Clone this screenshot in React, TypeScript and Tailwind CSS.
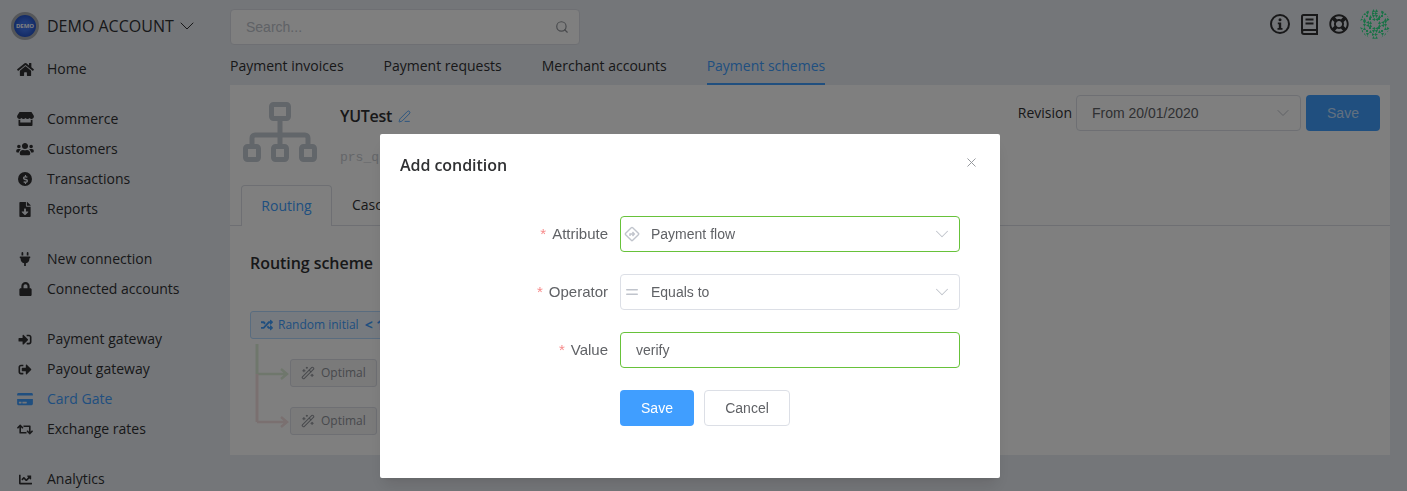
import { ChevronDown, Equal, Search, X, WandSparkles, PenLine } from 'lucide-react';
import {
  FaChartLine,
  FaCreditCard,
  FaDollarSign,
  FaFileDownload,
  FaHome,
  FaLock,
  FaPlug,
  FaRandom,
  FaRegLifeRing,
  FaRetweet,
  FaSignInAlt,
  FaSignOutAlt,
  FaStore,
  FaUsers,
} from 'react-icons/fa';
import type { ReactNode } from 'react';

const open = "[font-family:'Open_Sans',sans-serif]";
const arial = "[font-family:'Liberation_Sans',Arial,sans-serif]";

function DollarCircle() {
  return (
    <span className="flex h-[14px] w-[14px] items-center justify-center rounded-full bg-[#303133]">
      <FaDollarSign className="h-[9px] w-[9px] text-[#e9ecf2]" />
    </span>
  );
}

type NavEntry = { label: string; icon: ReactNode; active?: boolean };

const groups: NavEntry[][] = [
  [{ label: 'Home', icon: <FaHome className="h-[15px] w-[17px]" /> }],
  [
    { label: 'Commerce', icon: <FaStore className="h-[14px] w-[17px]" /> },
    { label: 'Customers', icon: <FaUsers className="h-[14px] w-[18px]" /> },
    { label: 'Transactions', icon: <DollarCircle /> },
    { label: 'Reports', icon: <FaFileDownload className="h-[15px] w-[12px]" /> },
  ],
  [
    { label: 'New connection', icon: <FaPlug className="h-[14px] w-[14px]" /> },
    { label: 'Connected accounts', icon: <FaLock className="h-[14px] w-[13px]" /> },
  ],
  [
    { label: 'Payment gateway', icon: <FaSignInAlt className="h-[13px] w-[14px]" /> },
    { label: 'Payout gateway', icon: <FaSignOutAlt className="h-[13px] w-[14px]" /> },
    { label: 'Card Gate', icon: <FaCreditCard className="h-[14px] w-[16px]" />, active: true },
    { label: 'Exchange rates', icon: <FaRetweet className="h-[13px] w-[16px]" /> },
  ],
  [{ label: 'Analytics', icon: <FaChartLine className="h-[13px] w-[15px]" /> }],
];

function Sidebar() {
  return (
    <aside className={`w-[230px] shrink-0 ${open}`}>
      <div className="flex h-[54px] items-center pb-[2px] pl-[11px]">
        <div className="flex h-[28px] w-[28px] items-center justify-center rounded-full border-[3px] border-[#a9acb2] bg-[radial-gradient(circle,#3f74ee_30%,#1440b4_100%)]">
          <span className="text-[6px] font-bold leading-none text-white">DEMO</span>
        </div>
        <span className="ml-2 text-base text-[#303133]">DEMO ACCOUNT</span>
        <ChevronDown className="ml-[1px] h-6 w-6 text-[#303133]" strokeWidth={1} />
      </div>
      <div className="flex flex-col gap-5">
        {groups.map((group, i) => (
          <div key={i}>
            {group.map(item => (
              <div
                key={item.label}
                className={`flex h-[30px] items-center text-sm ${item.active ? 'text-[#409eff]' : 'text-[#303133]'}`}
              >
                <span className="flex w-[50px] justify-center">{item.icon}</span>
                <span className="-ml-[3px]">{item.label}</span>
              </div>
            ))}
          </div>
        ))}
      </div>
    </aside>
  );
}

function TopBar() {
  return (
    <div className="flex h-[54px] items-start justify-between pt-[9px]">
      <div className={`flex h-9 w-[350px] items-center justify-between rounded border border-[#dcdfe6] bg-white pl-[15px] pr-[10px] text-sm text-[#c0c4cc] ${arial}`}>
        <span>Search...</span>
        <Search className="h-[14px] w-[14px] text-[#909399]" />
      </div>
      <div className="flex items-center gap-[11px] text-[#303133]">
        <svg viewBox="0 0 20 20" className="h-5 w-5">
          <circle cx="10" cy="10" r="9" fill="none" stroke="currentColor" strokeWidth="2" />
          <circle cx="10" cy="5.800" r="1.500" fill="currentColor" />
          <path d="M7.800 8.600h3.400v5.400h1.300v1.700H7.500V14h1.300v-3.700h-1z" fill="currentColor" />
        </svg>
        <svg viewBox="0 0 17 21" className="h-[21px] w-[17px]">
          <path d="M1 17V2.500A1.500 1.500 0 0 1 2.500 1H16v15H3a2 2 0 0 0 0 4h13v-4" fill="none" stroke="currentColor" strokeWidth="2" />
          <path d="M4.500 5.500h8M4.500 9.500h8" stroke="currentColor" strokeWidth="2" />
        </svg>
        <FaRegLifeRing className="h-5 w-5" />
        <Identicon />
      </div>
    </div>
  );
}

function Identicon() {
  // one quarter of the pattern, mirrored: s = square, t/b/l/r = triangle pointing that way, . = empty
  const half = ['..t.t', '.tb.r', 'l.stb', 'rt.sl', '.blt.'];
  const rows = [...half, ...[...half].reverse()];
  const shape = (c: string, x: number, y: number) => {
    const a = x * 3;
    const b = y * 3;
    if (c === 's') return `${a},${b} ${a + 2},${b} ${a + 2},${b + 2} ${a},${b + 2}`;
    if (c === 't') return `${a},${b + 3} ${a + 3},${b + 3} ${a + 1.500},${b}`;
    if (c === 'b') return `${a},${b} ${a + 3},${b} ${a + 1.500},${b + 3}`;
    if (c === 'l') return `${a + 3},${b} ${a + 3},${b + 3} ${a},${b + 1.500}`;
    if (c === 'r') return `${a},${b} ${a},${b + 3} ${a + 3},${b + 1.500}`;
    return '';
  };
  return (
    <svg viewBox="0 0 30 30" className="h-[30px] w-[30px] rounded-full">
      {rows.flatMap((row, y) => {
        const cells = (row + row.split('').reverse().join('')).split('');
        return cells.map((c, x) =>
          c === '.' ? null : <polygon key={`${x}-${y}`} points={shape(c, x, y)} fill="#34e48e" />,
        );
      })}
    </svg>
  );
}

function Tabs() {
  const tabs = ['Payment invoices', 'Payment requests', 'Merchant accounts', 'Payment schemes'];
  return (
    <div className={`flex h-[31px] gap-10 text-sm ${open}`}>
      {tabs.map((t, i) => (
        <div
          key={t}
          className={`pt-[2px] ${i === 3 ? 'border-b-2 border-[#409eff] text-[#409eff]' : 'text-[#303133]'}`}
        >
          {t}
        </div>
      ))}
    </div>
  );
}

function SchemeIcon() {
  return (
    <svg viewBox="0 0 74 60" className="h-[60px] w-[74px] text-[#c5ccd4]">
      <g fill="none" stroke="currentColor" strokeWidth="5">
        <rect x="28.500" y="2.500" width="17" height="14" rx="2" />
        <path d="M37 18v24M9 42v-6a3 3 0 0 1 3-3h50a3 3 0 0 1 3 3v6" />
        <rect x="2.500" y="44.500" width="13" height="13" rx="2" />
        <rect x="30.500" y="44.500" width="13" height="13" rx="2" />
        <rect x="58.500" y="44.500" width="13" height="13" rx="2" />
      </g>
    </svg>
  );
}

function Optimal() {
  return (
    <div className="flex h-7 w-[87px] items-center gap-[6px] rounded-[3px] border border-[#dcdfe6] bg-[#f4f4f5] pl-[10px] text-xs text-[#909399]">
      <WandSparkles className="h-[14px] w-[14px]" strokeWidth={1.8} />
      Optimal
    </div>
  );
}

function Scheme() {
  return (
    <div className={`flex h-[370px] flex-col bg-white ${open}`}>
      <div className="flex h-[100px] items-start justify-between pl-[13px] pr-[10px] pt-[10px]">
        <div className="flex">
          <div className="pt-[7px]">
            <SchemeIcon />
          </div>
          <div className="ml-[23px] pt-[9px]">
            <div className="flex items-center gap-[6px] text-base font-semibold tracking-[-0.3px] text-[#303133]">
              YUTest <PenLine className="h-[13px] w-[13px] text-[#409eff]" strokeWidth={1.6} />
            </div>
            <div className="mt-5 font-['Liberation_Mono',monospace] text-[13px] text-[#c8ccd2]">prs_q</div>
          </div>
        </div>
        <div className="flex items-center">
          <span className="mr-1 text-sm text-[#303133]">Revision</span>
          <div className={`flex h-9 w-[225px] items-center justify-between rounded border border-[#dcdfe6] pl-[15px] pr-[7px] text-sm text-[#606266] ${arial}`}>
            From 20/01/2020
            <ChevronDown className="h-5 w-5 text-[#c0c4cc]" strokeWidth={1.2} />
          </div>
          <div className={`ml-[5px] flex h-9 w-[74px] items-center justify-center rounded bg-[#409eff] text-sm text-[#fff]/70 ${arial}`}>Save</div>
        </div>
      </div>
      <div className="flex h-[41px] border-b border-[#dcdfe6] pl-[11px] text-sm">
        <div className="flex h-[41px] w-[91px] items-center justify-center rounded-t border border-b-0 border-[#dcdfe6] bg-white text-[#409eff]">Routing</div>
        <div className="flex items-center pl-5 text-[#303133]">Cascading</div>
      </div>
      <div className="relative pl-5 pt-[25px]">
        <div className="text-base font-semibold tracking-[-0.05px] text-[#303133]">Routing scheme</div>
        <div className="mt-[36px] flex h-7 w-[160px] items-center gap-[5px] rounded-[3px] border border-[#b3d8ff] bg-[#ecf5ff] pl-[10px] text-xs text-[#409eff]">
          <FaRandom className="h-3 w-3" /> Random initial <b className="ml-[1px] text-sm leading-none">&lt; 1</b>
        </div>
        <div className="ml-10 mt-5 flex flex-col gap-5">
          <Optimal />
          <Optimal />
        </div>
        <svg viewBox="0 0 36 84" className="absolute left-[24px] top-[118px] h-[84px] w-9" fill="none">
          <path d="M3 0V30" stroke="#dfeed8" strokeWidth="3" />
          <path d="M3 30H33M27 25l6 5-6 5" stroke="#dfeed8" strokeWidth="2.500" />
          <path d="M3 30V78" stroke="#f5e0e0" strokeWidth="3" />
          <path d="M3 78H33M27 73l6 5-6 5" stroke="#f5e0e0" strokeWidth="2.500" />
        </svg>
      </div>
    </div>
  );
}

function Field({ label, children }: { label: string; children: ReactNode }) {
  return (
    <div className="flex items-center">
      <label className="w-[240px] pr-3 text-right text-[15px] text-[#606266]">
        <span className="mr-[6px] text-[#f78989]">*</span>
        {label}
      </label>
      {children}
    </div>
  );
}

function Modal() {
  const ok = 'border-[#67c23a]';
  return (
    <div className="fixed inset-0 z-10 bg-[rgba(0,0,0,0.5)]">
      <div className={`absolute left-[380px] top-[134px] h-[344px] w-[620px] rounded-[2px] bg-white shadow-lg ${arial}`}>
        <div className="flex items-center justify-between pl-5 pr-[21px] pt-[19px]">
          <div className={`text-base font-semibold tracking-[-0.05px] text-[#303133] ${open}`}>Add condition</div>
          <X className="-mt-[6px] h-[15px] w-[15px] text-[#909399]" strokeWidth={1.5} />
        </div>
        <div className="flex flex-col gap-[22px] pt-[39px]">
          <Field label="Attribute">
            <div className={`flex h-9 w-[340px] items-center justify-between rounded border ${ok} pl-[3px] pr-[6px] text-sm text-[#606266]`}>
              <span className="flex items-center gap-[11px]">
                <svg viewBox="0 0 16 16" className="h-4 w-4 text-[#c0c4cc]" fill="none" stroke="currentColor" strokeWidth="1.400">
                  <rect x="3" y="3" width="10" height="10" rx="1" transform="rotate(45 8 8)" />
                  <path d="M6 10V8h4M8.500 6l1.800 2-1.800 2" />
                </svg>
                <span>Payment flow</span>
              </span>
              <ChevronDown className="h-[22px] w-[22px] text-[#c0c4cc]" strokeWidth={1.1} />
            </div>
          </Field>
          <Field label="Operator">
            <div className="flex h-9 w-[340px] items-center justify-between rounded border border-[#dcdfe6] pl-[2px] pr-[6px] text-sm text-[#606266]">
              <span className="flex items-center gap-[10px]">
                <Equal className="h-[18px] w-[18px] text-[#c0c4cc]" strokeWidth={2} />
                <span>Equals to</span>
              </span>
              <ChevronDown className="h-[22px] w-[22px] text-[#c0c4cc]" strokeWidth={1.1} />
            </div>
          </Field>
          <Field label="Value">
            <div className={`flex h-9 w-[340px] items-center rounded border ${ok} pl-[15px] text-sm text-[#606266]`}>verify</div>
          </Field>
          <div className="flex pl-[240px] text-sm">
            <div className="flex h-9 w-[74px] items-center justify-center rounded bg-[#409eff] text-white">Save</div>
            <div className="ml-[10px] flex h-9 w-[86px] items-center justify-center rounded border border-[#dcdfe6] text-[#606266]">Cancel</div>
          </div>
        </div>
      </div>
    </div>
  );
}

export default function App() {
  return (
    <div className={`flex h-[491px] overflow-hidden bg-[#e9ecf2] ${open}`}>
      <Sidebar />
      <main className="w-[1160px]">
        <TopBar />
        <Tabs />
        <Scheme />
      </main>
      <Modal />
    </div>
  );
}
